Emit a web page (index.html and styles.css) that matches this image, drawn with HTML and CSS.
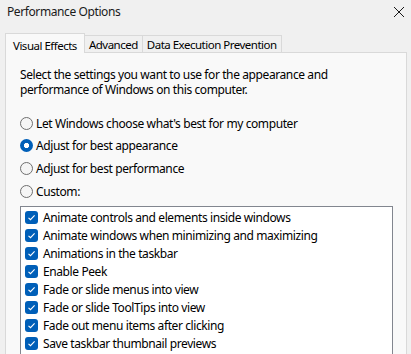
FILE: index.html
```html
<!DOCTYPE html>
<html>
<head>
<meta charset="utf-8">
<link rel="stylesheet" href="styles.css">
</head>
<body>
<div class="window">
  <div class="titlebar">
    <span class="title">Performance Options</span>
    <svg class="close" width="12" height="12" viewBox="0 0 12 12"><path d="M1 1 L11 11 M11 1 L1 11" stroke="#1a1a1a" stroke-width="1" fill="none"/></svg>
  </div>
  <div class="tabs">
    <div class="tab selected">Visual Effects</div>
    <div class="tab">Advanced</div>
    <div class="tab">Data Execution Prevention</div>
  </div>
  <div class="panel">
    <p class="desc">Select the settings you want to use for the appearance and performance of Windows on this computer.</p>
    <div class="radios">
      <div class="radio-row"><span class="radio"></span><span>Let Windows choose what's best for my computer</span></div>
      <div class="radio-row"><span class="radio on"></span><span>Adjust for best appearance</span></div>
      <div class="radio-row"><span class="radio"></span><span>Adjust for best performance</span></div>
      <div class="radio-row"><span class="radio"></span><span>Custom:</span></div>
    </div>
    <div class="list">
      <div class="item"><span class="cb"><svg width="13" height="13" viewBox="0 0 13 13"><path d="M3.5 6.8 L5.5 8.7 L9.6 4.4" stroke="#fff" stroke-width="1.1" fill="none"/></svg></span><span>Animate controls and elements inside windows</span></div>
      <div class="item"><span class="cb"><svg width="13" height="13" viewBox="0 0 13 13"><path d="M3.5 6.8 L5.5 8.7 L9.6 4.4" stroke="#fff" stroke-width="1.1" fill="none"/></svg></span><span>Animate windows when minimizing and maximizing</span></div>
      <div class="item"><span class="cb"><svg width="13" height="13" viewBox="0 0 13 13"><path d="M3.5 6.8 L5.5 8.7 L9.6 4.4" stroke="#fff" stroke-width="1.1" fill="none"/></svg></span><span>Animations in the taskbar</span></div>
      <div class="item"><span class="cb"><svg width="13" height="13" viewBox="0 0 13 13"><path d="M3.5 6.8 L5.5 8.7 L9.6 4.4" stroke="#fff" stroke-width="1.1" fill="none"/></svg></span><span>Enable Peek</span></div>
      <div class="item"><span class="cb"><svg width="13" height="13" viewBox="0 0 13 13"><path d="M3.5 6.8 L5.5 8.7 L9.6 4.4" stroke="#fff" stroke-width="1.1" fill="none"/></svg></span><span>Fade or slide menus into view</span></div>
      <div class="item"><span class="cb"><svg width="13" height="13" viewBox="0 0 13 13"><path d="M3.5 6.8 L5.5 8.7 L9.6 4.4" stroke="#fff" stroke-width="1.1" fill="none"/></svg></span><span>Fade or slide ToolTips into view</span></div>
      <div class="item"><span class="cb"><svg width="13" height="13" viewBox="0 0 13 13"><path d="M3.5 6.8 L5.5 8.7 L9.6 4.4" stroke="#fff" stroke-width="1.1" fill="none"/></svg></span><span>Fade out menu items after clicking</span></div>
      <div class="item"><span class="cb"><svg width="13" height="13" viewBox="0 0 13 13"><path d="M3.5 6.8 L5.5 8.7 L9.6 4.4" stroke="#fff" stroke-width="1.1" fill="none"/></svg></span><span>Save taskbar thumbnail previews</span></div>
      <div class="item"><span class="cb"></span></div>
    </div>
  </div>
</div>
</body>
</html>
```
FILE: styles.css
```css
html, body {
  margin: 0;
  padding: 0;
}
body {
  width: 411px;
  height: 354px;
  overflow: hidden;
  background: #f0f0f0;
  font-family: "Noto Sans", "Open Sans", sans-serif;
  font-size: 12px;
  letter-spacing: -0.4px;
  color: #000;
}
.window {
  display: flex;
  flex-direction: column;
  height: 354px;
}
.titlebar {
  flex: none;
  height: 33px;
  display: flex;
  align-items: flex-start;
  justify-content: space-between;
  padding: 0 6px 0 7px;
  box-sizing: border-box;
}
.title {
  line-height: 23px;
  color: #1a1a1a;
}
.close {
  margin-top: 6px;
}
.tabs {
  flex: none;
  display: flex;
  align-items: flex-end;
  padding-left: 5px;
  height: 19px;
  position: relative;
  z-index: 1;
}
.tab {
  height: 16px;
  line-height: 17px;
  padding: 0 4px;
  font-size: 11.5px;
  letter-spacing: -0.5px;
  border: 1px solid #d9d9d9;
  border-bottom: none;
  border-left: none;
  background: #f0f0f0;
}
.tab.selected {
  height: 19px;
  line-height: 23px;
  margin-bottom: -1px;
  border-left: 1px solid #d9d9d9;
  background: #f9f9f9;
  padding: 0 7px;
}
.panel {
  flex: 1;
  min-height: 0;
  overflow: hidden;
  margin: 0 4px 0 5px;
  border: 1px solid #d9d9d9;
  border-bottom: none;
  background: #f9f9f9;
  padding: 14px 13px 0 14px;
}
.desc {
  margin: 0;
  line-height: 15px;
}
.radios {
  display: flex;
  flex-direction: column;
  margin-top: 15px;
}
.radio-row {
  height: 22.6px;
  display: flex;
  align-items: center;
  gap: 3px;
}
.radio {
  width: 11px;
  height: 11px;
  border: 1px solid #6f6f6f;
  border-radius: 50%;
  background: #f5f5f5;
  flex: none;
}
.radio.on {
  width: 13px;
  height: 13px;
  border: none;
  background: radial-gradient(circle, #fff 0 2.4px, #005fb8 2.9px);
}
.list {
  margin-top: 4px;
  background: #fff;
  border: 1px solid #82868f;
  border-bottom: none;
  padding: 1px 0 0 4px;
  height: 200px;
}
.item {
  height: 18px;
  display: flex;
  align-items: center;
  gap: 5px;
}
.cb {
  width: 13px;
  height: 13px;
  border-radius: 3px;
  background: #005fb8;
  flex: none;
  display: block;
}
.cb svg {
  display: block;
}
```
